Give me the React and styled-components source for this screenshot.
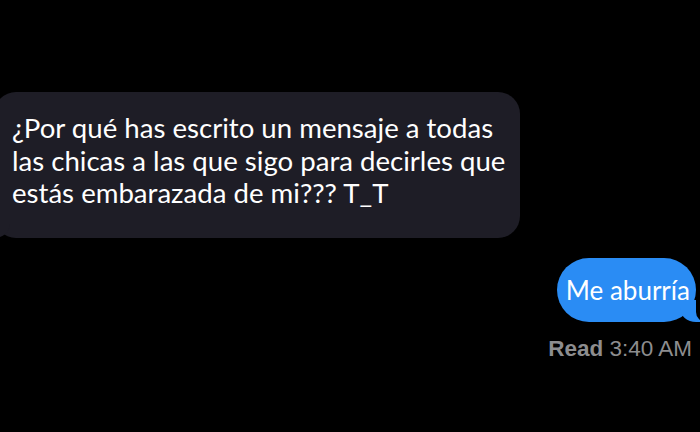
import React from 'react';
import styled, { createGlobalStyle } from 'styled-components';

const GlobalStyle = createGlobalStyle`
  html, body {
    margin: 0;
    padding: 0;
    background: #000;
  }
  body {
    width: 700px;
    height: 432px;
    overflow: hidden;
  }
`;

const Screen = styled.div`
  display: flex;
  flex-direction: column;
  padding-top: 92px;
  height: 432px;
  box-sizing: border-box;
  background: #000;
  overflow: hidden;
`;

const IncomingRow = styled.div`
  display: flex;
  margin-left: -6px;
`;

const OutgoingRow = styled.div`
  display: flex;
  flex-direction: column;
  align-items: flex-end;
  margin-top: 20px;
  margin-right: 4px;
`;

const Bubble = styled.div`
  position: relative;
  box-sizing: border-box;
  background: ${p => (p.$out ? '#2a8cf4' : '#1e1d26')};
  color: #fff;
  font-family: Lato, 'Noto Sans', sans-serif;
  font-size: ${p => (p.$out ? '26px' : '27.6px')};
  line-height: ${p => (p.$out ? '30px' : '32.5px')};
  border-radius: ${p => (p.$out ? '32px' : '22px')};
  padding: ${p => (p.$out ? '17px 6px 17px 9px' : '20px 18px 28px 18px')};
  width: ${p => (p.$out ? 'auto' : '526px')};
  white-space: nowrap;

  &::before,
  &::after {
    content: '';
    position: absolute;
    bottom: 0;
    height: 22px;
  }

  &::before {
    width: 20px;
    background: ${p => (p.$out ? '#2a8cf4' : '#1e1d26')};
    ${p => (p.$out
      ? 'right: -4px; border-bottom-left-radius: 16px 14px;'
      : 'left: -4px; border-bottom-right-radius: 16px 14px;')}
  }

  &::after {
    width: 10px;
    background: #000;
    ${p => (p.$out
      ? 'right: -10px; border-bottom-left-radius: 10px;'
      : 'left: -10px; border-bottom-right-radius: 10px;')}
  }
`;

const Line = styled.span`
  display: block;
`;

const Receipt = styled.div`
  margin-top: 14px;
  margin-right: 4px;
  font-family: 'Liberation Sans', Arial, sans-serif;
  font-size: 22.5px;
  color: #8d8d8f;

  b {
    font-weight: 700;
  }
`;

export default function App() {
  return (
    <>
      <GlobalStyle />
      <Screen>
        <IncomingRow>
          <Bubble>
            <Line>¿Por qué has escrito un mensaje a todas</Line>
            <Line>las chicas a las que sigo para decirles que</Line>
            <Line>estás embarazada de mi??? T_T</Line>
          </Bubble>
        </IncomingRow>
        <OutgoingRow>
          <Bubble $out>Me aburría</Bubble>
          <Receipt>
            <b>Read</b> 3:40 AM
          </Receipt>
        </OutgoingRow>
      </Screen>
    </>
  );
}
